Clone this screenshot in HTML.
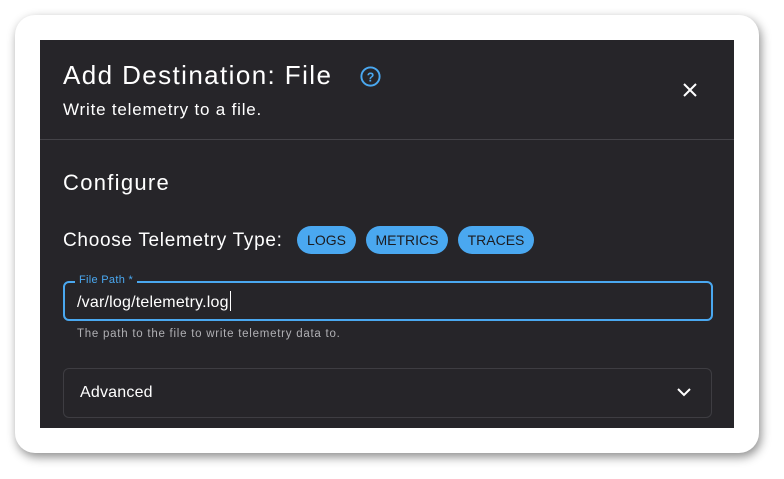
<!DOCTYPE html><html><head><style>
body{margin:0;width:784px;height:479px;background:#fff;font-family:"Liberation Sans",sans-serif;overflow:hidden;position:relative}
.card{position:absolute;left:15px;top:15px;width:744px;height:438px;background:#fff;border-radius:20px;box-shadow:2px 4px 10px rgba(0,0,0,.45)}
.p{position:absolute;left:40px;top:40px;width:694px;height:388px;background:#262529;color:#fff}
.t{position:absolute;left:23px;top:20px;font-size:26px;letter-spacing:1.4px}
.s{position:absolute;left:23px;top:60px;font-size:17px;letter-spacing:0.8px}
.hr{position:absolute;left:0;right:0;top:99px;height:1px;background:#444348}
.c{position:absolute;left:23px;top:130px;font-size:22px;letter-spacing:1.3px}
.ct{position:absolute;left:23px;top:190px;font-size:19px;letter-spacing:0.7px}
.chip{position:absolute;top:186px;height:28px;line-height:28px;border-radius:14px;background:#4aa8f0;color:#1c1c20;font-size:14px;text-align:center}
.in{position:absolute;left:23px;top:241px;width:646px;height:36px;border:2px solid #4aa8f0;border-radius:6px}
.lab{position:absolute;left:10px;top:-9px;background:#262529;color:#4aa8f0;font-size:11px;padding:0 4px;letter-spacing:0.3px}
.v{position:absolute;left:12px;top:8px;font-size:16px;letter-spacing:0.2px}
.cur{display:inline-block;width:1px;height:20px;background:#fff;vertical-align:-4px;margin-left:1px}
.h{position:absolute;left:37px;top:288px;font-size:11.5px;color:#b0b0b4;letter-spacing:0.75px}
.adv{position:absolute;left:23px;top:328px;width:647px;height:48px;border:1px solid #3e3d42;border-radius:6px}
</style></head><body><div class="card"></div><div class="p">
<div class="t">Add Destination: File</div>
<svg style="position:absolute;left:319px;top:25px" width="23" height="23" viewBox="0 0 24 24"><circle cx="12" cy="12" r="9.5" fill="none" stroke="#4aa8f0" stroke-width="2"/><text x="12" y="17" font-size="13" font-weight="bold" fill="#4aa8f0" text-anchor="middle" font-family="Liberation Sans">?</text></svg>
<svg style="position:absolute;left:642px;top:42px" width="16" height="16" viewBox="0 0 16 16"><path d="M2 2L14 14M14 2L2 14" stroke="#fff" stroke-width="2"/></svg>
<div class="s">Write telemetry to a file.</div>
<div class="hr"></div>
<div class="c">Configure</div>
<div class="ct">Choose Telemetry Type:</div>
<div class="chip" style="left:257px;width:59px">LOGS</div>
<div class="chip" style="left:326px;width:82px">METRICS</div>
<div class="chip" style="left:418px;width:76px">TRACES</div>
<div class="in"><span class="lab">File Path *</span><span class="v">/var/log/telemetry.log<span class="cur"></span></span></div>
<div class="h">The path to the file to write telemetry data to.</div>
<div class="adv"><span style="position:absolute;left:16px;top:15px;font-size:16px;letter-spacing:0.2px">Advanced</span>
<svg style="position:absolute;left:613px;top:18px" width="14" height="10" viewBox="0 0 14 10"><path d="M1 2L7 8L13 2" fill="none" stroke="#fff" stroke-width="2"/></svg></div>
</div></body></html>
